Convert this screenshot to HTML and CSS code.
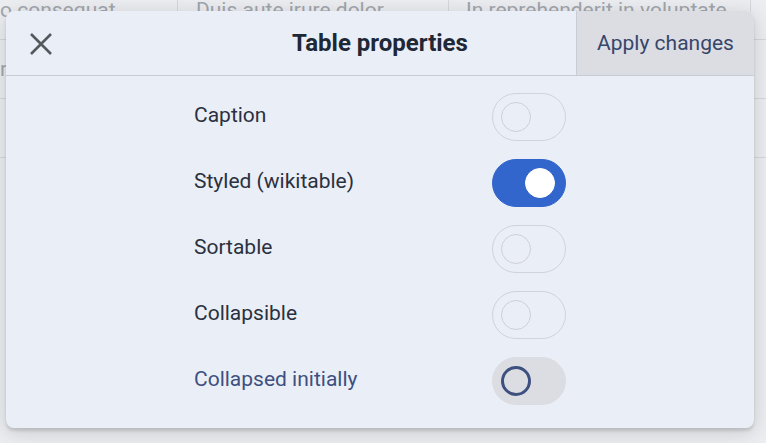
FILE: index.html
```html
<!DOCTYPE html>
<html>
<head>
<meta charset="utf-8">
<link rel="stylesheet" href="styles.css">
</head>
<body>
<div class="page">
  <div class="table">
    <div class="row">
      <div class="cell c1">o consequat</div>
      <div class="cell c2">Duis aute irure dolor</div>
      <div class="cell c3">In reprehenderit in voluptate</div>
    </div>
    <div class="row">
      <div class="cell c1">r</div>
      <div class="cell c2"></div>
      <div class="cell c3"></div>
    </div>
    <div class="row">
      <div class="cell c1"></div>
      <div class="cell c2"></div>
      <div class="cell c3"></div>
    </div>
  </div>
</div>
<div class="dialog">
  <div class="header">
    <button class="close" aria-label="Close">
      <svg width="24" height="24" viewBox="0 0 24 24"><path d="M2 2 L22 22 M22 2 L2 22" stroke="#54595d" stroke-width="2.6" fill="none"/></svg>
    </button>
    <div class="title">Table properties</div>
    <button class="apply">Apply changes</button>
  </div>
  <div class="body">
    <div class="form">
      <div class="label">Caption</div>
      <div class="toggle"><span class="knob"></span></div>
      <div class="label">Styled (wikitable)</div>
      <div class="toggle on"><span class="knob"></span></div>
      <div class="label">Sortable</div>
      <div class="toggle"><span class="knob"></span></div>
      <div class="label">Collapsible</div>
      <div class="toggle"><span class="knob"></span></div>
      <div class="label hover">Collapsed initially</div>
      <div class="toggle hovered"><span class="knob"></span></div>
    </div>
  </div>
</div>
</body>
</html>
```
FILE: styles.css
```css
html, body {
  margin: 0;
  padding: 0;
  width: 766px;
  height: 443px;
  overflow: hidden;
  background: #d9dadf;
  font-family: Roboto, "Liberation Sans", sans-serif;
}
.page {
  background: #eceef1;
  height: 443px;
  overflow: hidden;
}
.table {
  margin-top: -19px;
}
.row {
  display: flex;
  height: 58px;
  border-bottom: 1px solid #d6d8dc;
}
.cell {
  display: flex;
  align-items: center;
  font-size: 21px;
  color: #a2a6ad;
  border-right: 1px solid #d6d8dc;
  box-sizing: border-box;
  white-space: nowrap;
  overflow: hidden;
}
.c1 { width: 178px; padding-left: 0; }
.c2 { width: 271px; padding-left: 18px; }
.c3 { width: 302px; padding-left: 17px; }

.dialog {
  position: absolute;
  left: 6px;
  top: 11px;
  width: 748px;
  height: 417px;
  background: #eaeef6;
  border-radius: 8px;
  box-shadow: 0 3px 3px rgba(0,0,0,0.12), 0 4px 22px rgba(0,0,0,0.16);
  overflow: hidden;
  display: flex;
  flex-direction: column;
}
.header {
  height: 64px;
  display: flex;
  align-items: stretch;
  border-bottom: 1px solid #c8ccd4;
  flex-shrink: 0;
}
.close {
  width: 70px;
  border: 0;
  background: transparent;
  padding: 0;
  display: flex;
  align-items: center;
  justify-content: center;
}
.close svg { display: block; margin-left: -1px; margin-top: 1px; }
.title {
  flex: 1;
  display: flex;
  align-items: center;
  justify-content: center;
  font-weight: bold;
  font-size: 24px;
  color: #202736;
  padding-left: 108px;
}
.apply {
  width: 178px;
  border: 0;
  border-left: 1px solid #c8ccd4;
  background: #dcdde2;
  font-family: Roboto, "Liberation Sans", sans-serif;
  font-size: 21px;
  color: #36466b;
  padding: 0;
}
.body {
  flex: 1;
  padding-top: 17px;
}
.form {
  width: 372px;
  margin: 0 auto;
  display: grid;
  grid-template-columns: 1fr 74px;
  row-gap: 18px;
  align-items: center;
}
.label {
  font-size: 21px;
  color: #2a3140;
  margin-top: -5px;
}
.label.hover { color: #3e5080; }
.toggle {
  position: relative;
  width: 74px;
  height: 48px;
  box-sizing: border-box;
  border: 1px solid #d0d3d9;
  border-radius: 24px;
}
.knob {
  position: absolute;
  left: 8px;
  top: 8px;
  width: 30px;
  height: 30px;
  box-sizing: border-box;
  border: 1px solid #cdd0d6;
  border-radius: 50%;
}
.toggle.on {
  background: #3366cc;
  border-color: #3366cc;
}
.toggle.on .knob {
  left: 32px;
  background: #fff;
  border-color: #fff;
}
.toggle.hovered {
  background: #dcdde2;
  border-color: #dcdde2;
}
.toggle.hovered .knob {
  border: 3px solid #3e5080;
}
```
